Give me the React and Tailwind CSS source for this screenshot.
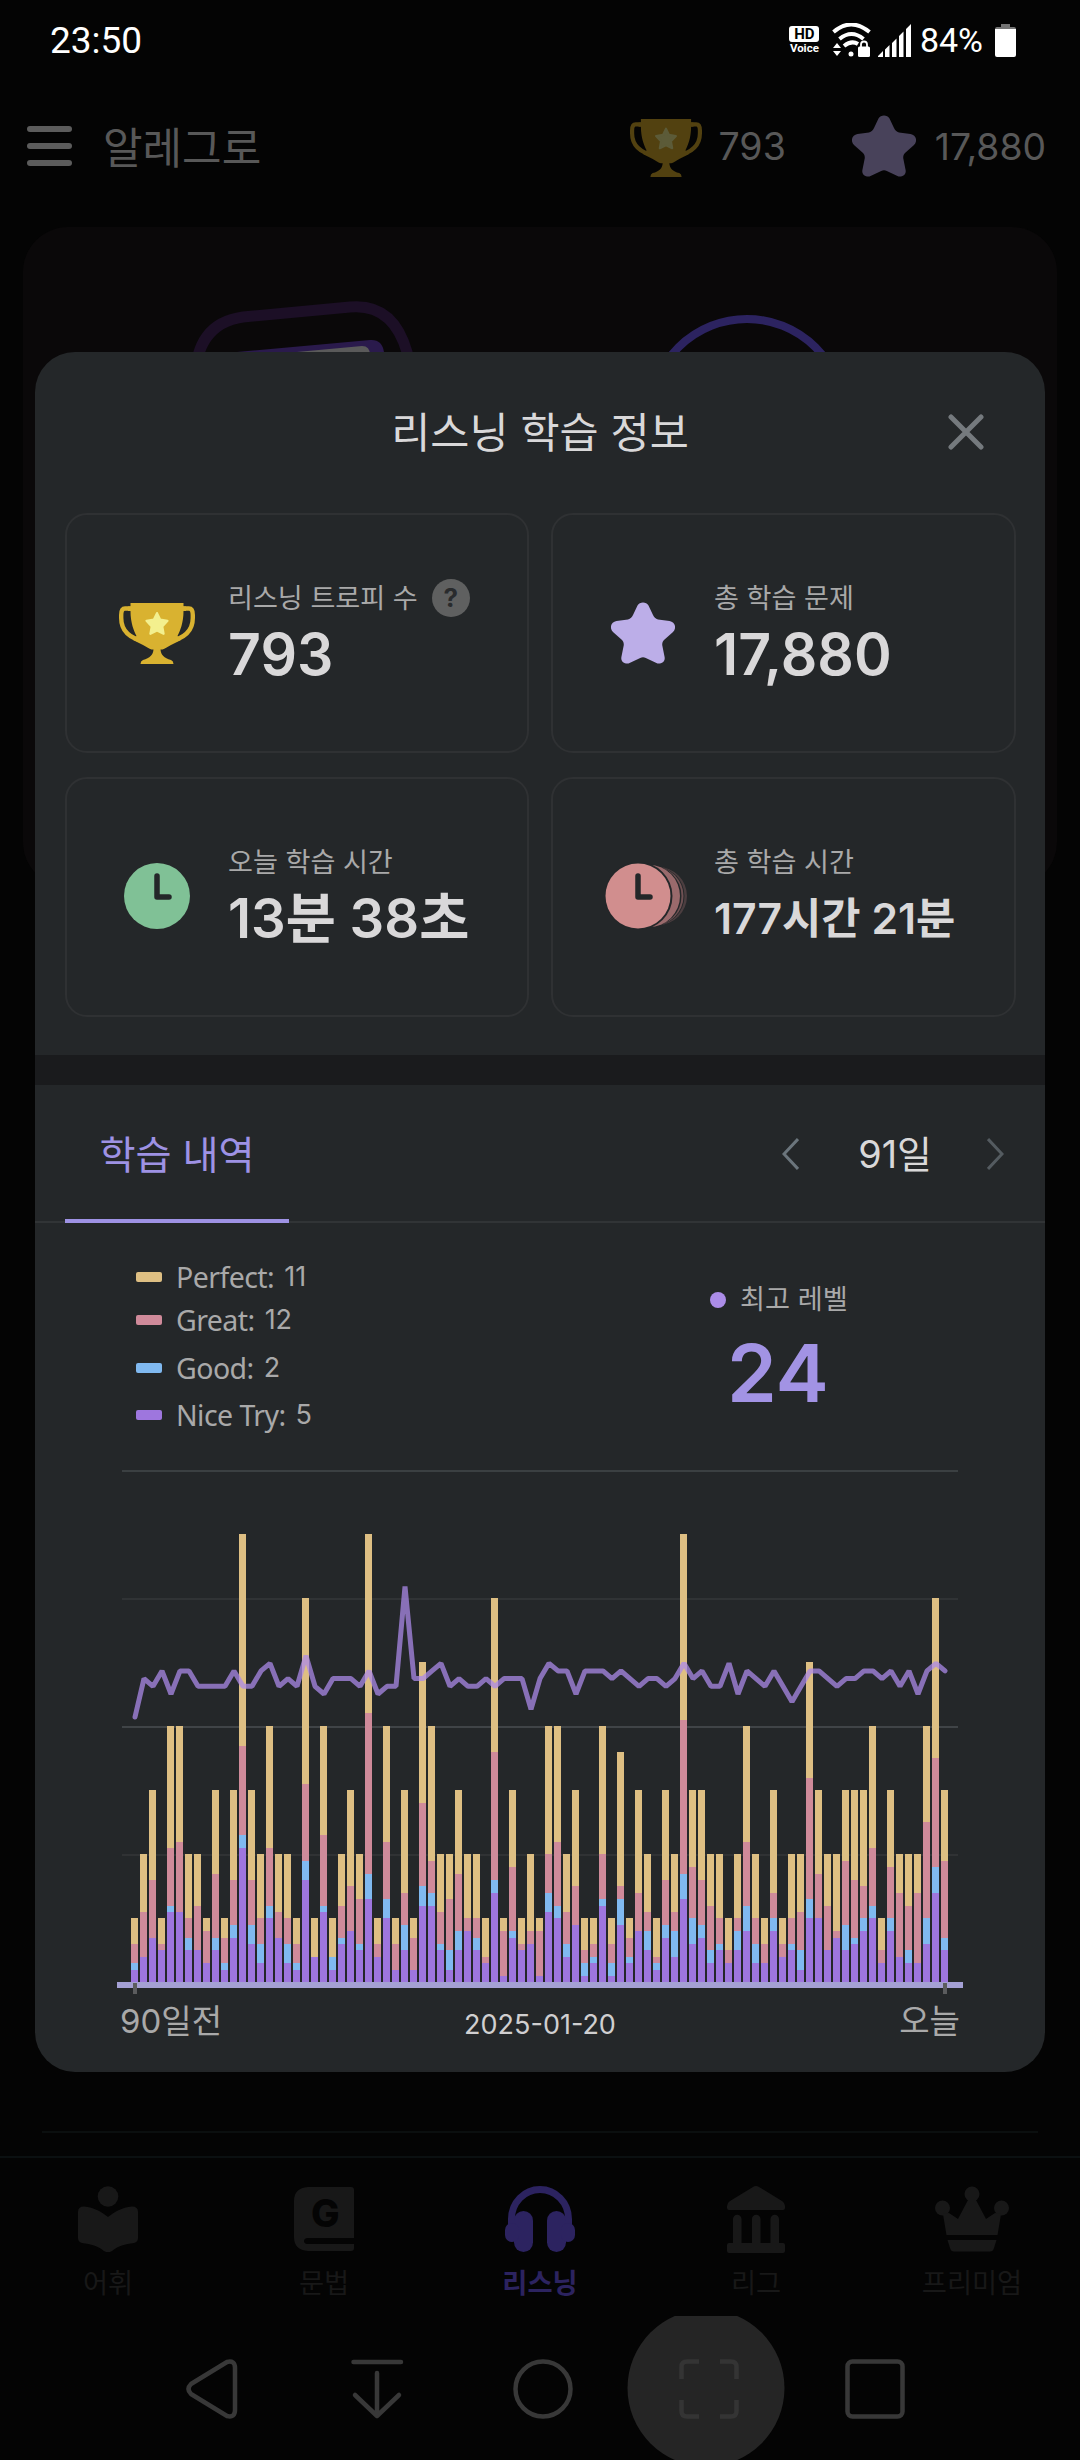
import React from 'react';

// [nice try, good, great, perfect] running totals per day
const days = [
  [2,3,6,10],[4,4,11,20],[7,7,16,30],[5,5,6,10],[11,12,21,40],[11,11,22,40],[5,7,10,20],[5,5,12,20],[3,3,8,10],[5,7,17,30],
  [2,3,7,10],[7,9,16,30],[21,23,37,70],[6,9,16,30],[3,6,10,20],[10,12,21,40],[7,7,11,20],[3,6,10,20],[2,3,6,10],[16,19,31,60],
  [4,4,4,10],[11,12,23,40],[2,4,4,10],[6,7,12,20],[8,8,15,30],[5,6,13,20],[13,17,42,70],[4,4,6,10],[10,13,22,40],[2,2,6,10],
  [5,9,14,30],[2,2,7,10],[12,15,28,50],[12,14,19,40],[5,6,11,20],[2,5,13,20],[5,8,17,30],[8,8,10,20],[5,7,10,20],[3,3,4,10],
  [14,16,36,60],[1,1,8,10],[7,8,18,30],[5,5,6,10],[6,6,8,20],[1,1,8,10],[11,14,20,40],[10,12,22,40],[4,6,11,20],[9,9,15,30],
  [1,3,5,10],[3,4,6,10],[12,13,20,40],[1,3,6,10],[9,13,15,36],[3,4,7,10],[8,8,14,30],[5,8,11,20],[2,3,4,10],[7,9,16,30],
  [4,8,11,20],[13,17,41,70],[6,10,18,30],[7,9,16,30],[3,5,12,20],[5,6,10,20],[3,3,5,10],[5,8,10,20],[8,12,22,40],[3,6,10,20],
  [3,3,6,10],[8,10,14,30],[4,4,6,10],[5,6,10,20],[2,5,11,20],[10,13,32,50],[10,10,17,30],[5,5,12,20],[7,7,8,20],[5,9,19,30],
  [6,7,16,30],[8,10,15,30],[10,12,21,40],[3,3,5,10],[8,10,18,30],[4,4,14,20],[3,5,12,20],[3,3,14,20],[6,10,25,40],[14,18,35,60],
  [5,7,19,30],
];

const levels = [
  7,12,11,13,10,13,13,11,11,11,11,13,11,11,13,14,11,12,11,15,11,10,12,12,12,11,13,10,11,11,
  24,12,12,13,14,11,12,11,11,12,11,12,12,12,8,12,14,13,13,10,13,13,13,12,13,12,11,12,12,11,
  12,14,12,13,11,11,14,10,13,12,11,13,11,9,11,13,13,12,11,12,12,13,13,12,13,11,13,10,13,14,
  13,
];

const colors = ['#9e76de', '#80b9f0', '#cf8a9a', '#debf83'];

const legend = [
  { label: 'Perfect:', count: 11, dot: 'bg-[#debf83]', h: 'h-[43px]' },
  { label: 'Great:', count: 12, dot: 'bg-[#cf8a9a]', h: 'h-[43px]' },
  { label: 'Good:', count: 2, dot: 'bg-[#80b9f0]', h: 'h-[53px]' },
  { label: 'Nice Try:', count: 5, dot: 'bg-[#9e76de]', h: 'h-[41px]' },
];

const STAR = 'M32 3 L40.5 20.5 L60 23.5 L46 38.5 L49.5 58 L32 49.5 L14.5 58 L18 38.5 L4 23.5 L23.5 20.5 Z';

function Star({ color, className }) {
  return (
    <svg viewBox="0 0 64 62" className={className}>
      <path d="M26.500 3.600C28.500 -.6 35.500 -.6 37.500 3.600L42 13C43 15.200 44.500 17 47 17.400L58.500 19C64 20 66 26 62 30L53 38C51.500 39.600 51 41.500 51.300 43.500L53.600 55C54.500 60 50.500 62 46.500 61.500L34.800 56Q32 54.600 29.200 56L17.500 61.500C13.500 62 9.500 60 10.400 55L12.700 43.500C13 41.500 12.500 39.600 11 38L2 30C-2 26 0 20 5.500 19L17 17.400C19.500 17 21 15.200 22 13Z" fill={color} />
    </svg>
  );
}

function Trophy({ color, star, className }) {
  return (
    <svg viewBox="0 0 76 61" className={className}>
      <path d="M13 5.500H6Q2.200 5.500 2.200 12V15C2.200 28 11 35.500 26 38.500M63 5.500H70Q73.800 5.500 73.800 12V15C73.800 28 65 35.500 50 38.500" fill="none" stroke={color} strokeWidth="4.400" />
      <path d="M11.500 0H64.500V3.500H67V8H64.500C64.500 20 61 28 58.500 33L62 37L52 42C48 44 46 46 43.500 46.500H41.500C42 52 45 55 52 57Q54.500 58 54.500 61H21.500Q21.500 58 24 57C31 55 34 52 34.500 46.500H32.500C30 46 28 44 24 42L14 37L17.500 33C15 28 11.500 20 11.500 8H9V3.500H11.500Z" fill={color} />
      <path d={STAR} fill={star} stroke={star} strokeWidth="6" strokeLinejoin="round" transform="translate(26 9) scale(.375)" />
    </svg>
  );
}

function Clock({ color, echo }) {
  return (
    <svg viewBox="0 0 84 68" className="w-[84px] h-[68px]">
      {echo && (
        <>
          <circle cx="53" cy="34" r="29" fill="#4c3e40" />
          <circle cx="50" cy="34" r="29.500" fill="#242729" />
          <circle cx="49" cy="34" r="29.500" fill="#6f5153" />
          <circle cx="46" cy="34" r="30.500" fill="#242729" />
          <circle cx="44" cy="34" r="31" fill="#9a6a6c" />
          <circle cx="33.500" cy="34" r="34" fill="#242729" />
        </>
      )}
      <circle cx="33" cy="34" r={echo ? 32.500 : 33} fill={color} />
      <path d="M33 14V35H45" fill="none" stroke="#242729" strokeWidth="5.500" strokeLinecap="round" strokeLinejoin="round" />
    </svg>
  );
}

function StatCard({ icon, label, help, value, valueClass }) {
  return (
    <div className="flex h-60 items-center rounded-[22px] border-2 border-[#2f3133]">
      <div className="flex w-[161px] shrink-0">{icon}</div>
      <div className="flex flex-col pt-[5px]">
        <div className="flex h-[38px] items-center text-[27.100px] leading-[38px] text-[#a9a9a9] whitespace-nowrap">
          <span className="pt-[2px]">{label}</span>
          {help && (
            <span className="ml-[14px] flex h-[38px] w-[38px] items-center justify-center rounded-full bg-[#5f6060] text-[26px] font-bold text-[#292b2d]">?</span>
          )}
        </div>
        <div className={'flex h-[76px] items-center whitespace-nowrap font-semibold text-[#d9d8d9] ' + valueClass}>{value}</div>
      </div>
    </div>
  );
}

function StatusBar() {
  return (
    <div className="flex h-[80px] items-center justify-between pl-[50px] pr-[64px] font-['Roboto'] text-white">
      <span className="text-[37px] leading-none">23:50</span>
      <div className="flex h-[33px] items-center">
        <div className="mr-[12px] flex w-[31px] flex-col items-center">
          <span className="flex h-[16px] w-[30px] items-center justify-center rounded-[3px] bg-white text-[15px] font-bold leading-none text-black">HD</span>
          <span className="text-[11.500px] font-bold leading-[12px]">Voice</span>
        </div>
        <svg viewBox="0 0 40 34" className="w-[40px] h-[34px]" fill="none" stroke="#fff" strokeWidth="4">
          <path d="M1.500 9Q19 -6 37.500 9" />
          <path d="M7.500 16Q19.500 6 31.500 16" />
          <path d="M12 23Q19.500 17 26 21" />
          <circle cx="19" cy="31" r="2.500" fill="#fff" stroke="none" />
          <path d="M1 25L5 20L9 25ZM1 28L5 33L9 28Z" fill="#fff" stroke="none" />
          <rect x="26" y="23.500" width="12" height="10.500" rx="1.500" fill="#fff" stroke="none" />
          <path d="M29 24V21.500Q29 18.500 32 18.500T35 21.500V24" strokeWidth="1.800" />
        </svg>
        <svg viewBox="0 0 34 33" className="ml-[6px] w-[34px] h-[33px]" fill="#fff">
          <path d="M0 33V32L5 27V33ZM7 33V25.500L11.500 21V33ZM14 33V19L18.500 14.500V33ZM21 33V12L25.500 7.500V33ZM28 33V5L33 0V33Z" />
        </svg>
        <span className="ml-[8px] text-[34px] leading-none">84%</span>
        <svg viewBox="0 0 21 33" className="ml-[12px] w-[21px] h-[33px]">
          <path d="M6 0H15V3H19Q21 3 21 5H0Q0 3 2 3H6Z" fill="#757575" />
          <path d="M0 5H21V31Q21 33 19 33H2Q0 33 0 31Z" fill="#fff" />
        </svg>
      </div>
    </div>
  );
}

function Header() {
  return (
    <div className="flex h-[147px] items-start pl-[27px] pr-[34px] pt-[35px] text-[#585858]">
      <div className="mt-[11px] flex w-[45px] flex-col gap-[11px]">
        <div className="h-[6px] rounded-full bg-[#5c5c5c]" />
        <div className="h-[6px] rounded-full bg-[#5c5c5c]" />
        <div className="h-[6px] rounded-full bg-[#5c5c5c]" />
      </div>
      <span className="ml-[31px] pt-[2px] text-[43px] leading-[62px]">알레그로</span>
      <div className="ml-auto flex">
        <Trophy color="#524110" star="#5c5b38" className="mt-[4px] h-[58px] w-[72px]" />
        <span className="ml-[17px] pt-px text-[37.500px] leading-[62px]">793</span>
        <Star color="#48425a" className="ml-[66px] h-[62px] w-[64px]" />
        <span className="ml-[19px] pt-px text-[37.300px] leading-[62px]">17,880</span>
      </div>
    </div>
  );
}

function HomeCard() {
  return (
    <div className="mx-[23px] h-[660px] overflow-hidden rounded-[45px] bg-[#0a0809]">
      <svg viewBox="23 227 1034 200" className="w-[1034px] h-[200px]" fill="none">
        <path d="M195 390Q192 324 243 317L350 307Q393 303 407 352L412 400" stroke="#1c0f26" strokeWidth="11" />
        <path d="M226 353L370 340Q382 339 384 352V400H226Z" fill="#2a1a4c" />
        <path d="M286 353L362 346Q370 346 370 355V400H286Z" fill="#5a5a5a" />
        <circle cx="747" cy="416" r="97" stroke="#2c2360" strokeWidth="8" />
      </svg>
    </div>
  );
}

function Chart() {
  const unit = 6.405;
  const y = (v) => 512.500 - v * unit;
  const line = levels.map((l, i) => `${18 + i * 9},${(216.300 - (l - 11) * 7.680).toFixed(1)}`).join(' ');
  return (
    <svg viewBox="0 0 846 524" className="w-[846px] h-[524px]">
      <g shapeRendering="crispEdges">
        <rect x="5" y="0" width="836" height="2" fill="#3b4042" />
        <rect x="5" y="128" width="836" height="2" fill="#303335" />
        <rect x="5" y="256" width="836" height="2" fill="#404447" />
        <rect x="5" y="384" width="836" height="2" fill="#303234" />
        {days.map((d, i) => (
          <g key={i}>
            {d.map((v, j) => {
              const low = j ? d[j - 1] : 0;
              return v > low ? <rect key={j} x={14 + i * 9} y={y(v)} width="7" height={(v - low) * unit} fill={colors[j]} /> : null;
            })}
          </g>
        ))}
        <rect x="0" y="512" width="846" height="6" fill="#a4a0d4" />
        <rect x="16" y="513" width="4" height="11" fill="#5b5c5e" />
        <rect x="826" y="513" width="4" height="11" fill="#5b5c5e" />
      </g>
      <polyline points={line} fill="none" stroke="#ab8aea" strokeOpacity=".74" strokeWidth="5" strokeLinecap="round" strokeLinejoin="bevel" />
    </svg>
  );
}

function StudyModal() {
  return (
    <div className="absolute left-[35px] top-[352px] flex h-[1720px] w-[1010px] flex-col rounded-[40px] bg-[#242729] text-[#d9d8d9]">
      <div className="relative flex h-[161px] justify-center pt-[50px]">
        <h2 className="text-[42.500px] leading-[62px]">리스닝 학습 정보</h2>
        <svg viewBox="0 0 36 36" className="absolute right-[61px] top-[62px] w-[36px] h-[36px]" stroke="#757a7e" strokeWidth="5" strokeLinecap="round">
          <path d="M3 3L33 33M33 3L3 33" />
        </svg>
      </div>

      <div className="grid grid-cols-[464px_465px] gap-x-[22px] gap-y-6 pl-[30px]">
        <StatCard icon={<Trophy color="#d9b230" star="#f3f08e" className="ml-[52px] mt-px h-[61px] w-[76px]" />} label="리스닝 트로피 수" help value="793" valueClass="text-[57.200px]" />
        <StatCard icon={<Star color="#bcaee8" className="-mt-px ml-[58px] h-[62px] w-[64px]" />} label="총 학습 문제" value="17,880" valueClass="text-[57.200px]" />
        <StatCard icon={<div className="-mt-[2px] ml-[57px]"><Clock color="#80c196" /></div>} label="오늘 학습 시간" value="13분 38초" valueClass="text-[54.500px]" />
        <StatCard icon={<div className="-mt-[2px] ml-[52px]"><Clock color="#d18e8e" echo /></div>} label="총 학습 시간" value="177시간 21분" valueClass="text-[42.700px] pt-px" />
      </div>

      <div className="mt-[38px] h-[30px] bg-[#1a1b1d]" />

      <div className="flex h-[138px] items-stretch border-b-2 border-[#313436] pl-[30px] pr-[41px]">
        <div className="-mb-[2px] flex w-[224px] justify-center border-b-4 border-[#9e92e4] pt-[40px] text-[39.200px] leading-[60px] text-[#9e92e4]">학습 내역</div>
        <div className="ml-auto flex items-start pt-[39px]">
          <svg viewBox="0 0 17 32" className="mt-[14px] w-[17px] h-[32px]" fill="none" stroke="#6b757c" strokeWidth="3">
            <path d="M16 1L2 16L16 31" />
          </svg>
          <span className="w-[188px] pl-[4px] text-center text-[37.800px] leading-[60px]">91일</span>
          <svg viewBox="0 0 17 32" className="mt-[14px] w-[17px] h-[32px]" fill="none" stroke="#545b60" strokeWidth="3">
            <path d="M1 1L15 16L1 31" />
          </svg>
        </div>
      </div>

      <div className="flex h-[247px] pl-[101px]">
        <div className="flex w-[574px] flex-col pt-[32px] text-[#a9a9a9]">
          {legend.map((l) => (
            <div key={l.label} className={'flex items-center ' + l.h}>
              <span className={'mr-[14px] h-[10px] w-[26px] rounded-[2px] ' + l.dot} />
              <span className="font-['Noto_Sans'] text-[28.500px] leading-[40px] tracking-[-0.550px]">{l.label}</span>
              <span className="ml-[10px] text-[27px] leading-[40px]">{l.count}</span>
            </div>
          ))}
        </div>
        <div className="pt-[58px]">
          <div className="flex h-[38px] items-center text-[27.200px] text-[#a9a9a9]">
            <span className="mr-[14px] h-[16px] w-[16px] rounded-full bg-[#ac8de8]" />
            <span className="pt-px">최고 레벨</span>
          </div>
          <div className="-mt-px pl-[17px] text-[80px] font-semibold leading-[110px] text-[#a293e4]">24</div>
        </div>
      </div>

      <div className="px-[82px]">
        <Chart />
        <div className="flex justify-between pl-[3px] pr-[3px] text-[33px] leading-[54px] text-[#a9a9a9]">
          <span className="w-[150px]">90일전</span>
          <span className="pt-[4px] text-[27px] text-[#d0cfd0]">2025-01-20</span>
          <span className="w-[150px] text-right">오늘</span>
        </div>
      </div>
    </div>
  );
}

function TabBar() {
  const tabs = [
    {
      label: '어휘',
      icon: (
        <svg viewBox="0 0 60 66" className="w-[60px] h-[66px]" fill="currentColor">
          <circle cx="30" cy="10.500" r="10.300" />
          <path d="M0 26Q0 20.500 6 20.500C16 21.500 24 26 30 31C36 26 44 21.500 54 20.500Q60 20.500 60 26V52Q60 56 56 57C47 58 40 60 34 65Q30 67.500 26 65C20 60 13 58 4 57Q0 56 0 52Z" />
        </svg>
      ),
    },
    {
      label: '문법',
      icon: (
        <div className="relative">
          <svg viewBox="0 0 60 64" className="w-[60px] h-[64px]" fill="currentColor">
            <path d="M14 0H57Q60 0 60 3V51H13Q10 51.500 10 54T13 57H60V61Q60 64 57 64H14Q0 63 0 50V14Q0 1 14 0Z" />
          </svg>
          <span className="absolute left-[17px] top-[3px] text-[38px] font-extrabold leading-[46px] text-[#040404]">G</span>
        </div>
      ),
    },
    {
      label: '리스닝',
      active: true,
      icon: (
        <svg viewBox="0 0 70 66" className="w-[70px] h-[66px]" fill="currentColor">
          <path d="M6.500 40V33A28.500 29.500 0 0 1 63.500 33V40" fill="none" stroke="currentColor" strokeWidth="7" />
          <rect x="9" y="25" width="19" height="41" rx="9.500" />
          <rect x="42" y="25" width="19" height="41" rx="9.500" />
          <rect x="0" y="37" width="14" height="19" rx="7" />
          <rect x="56" y="37" width="14" height="19" rx="7" />
        </svg>
      ),
    },
    {
      label: '리그',
      icon: (
        <svg viewBox="0 0 58 67" className="w-[58px] h-[67px]" fill="currentColor">
          <path d="M26 1Q29 -1 32 1L55 15Q58 17 58 20V22Q58 24 56 24H2Q0 24 0 22V20Q0 17 3 15Z" />
          <path d="M6 57V33A4.200 4.200 0 0 1 14.500 33V57H25V33A4.200 4.200 0 0 1 33.500 33V57H43.500V33A4.200 4.200 0 0 1 52 33V57H56Q58 57 58 59V65Q58 67 56 67H2Q0 67 0 65V59Q0 57 2 57Z" />
        </svg>
      ),
    },
    {
      label: '프리미엄',
      icon: (
        <svg viewBox="0 0 74 66" className="w-[74px] h-[66px]" fill="currentColor">
          <circle cx="37" cy="8" r="7.500" />
          <circle cx="7.500" cy="22" r="7.500" />
          <circle cx="66.500" cy="22" r="7.500" />
          <path d="M8 28L14 27L23 33L33 14H41L51 33L60 27L66 28L62.500 49H11.500ZM12.500 54H61.500L59 62Q58 65.500 55 65.500H19Q16 65.500 15 62Z" />
        </svg>
      ),
    },
  ];
  return (
    <div className="flex h-[160px] border-t-2 border-[#0b1011] text-[#181818]">
      {tabs.map((t) => (
        <div key={t.label} className={t.active ? 'flex w-[216px] flex-col items-center text-[#2c2360] font-bold' : 'flex w-[216px] flex-col items-center'}>
          <div className="flex h-[102px] items-center pt-[20px]">{t.icon}</div>
          <span className="text-[27.300px] leading-[48px]">{t.label}</span>
        </div>
      ))}
    </div>
  );
}

function SystemNav() {
  return (
    <svg viewBox="0 2316 1080 144" className="w-[1080px] h-[144px]" fill="none" stroke="#383838" strokeWidth="5" strokeLinecap="round" strokeLinejoin="round">
      <path d="M227 2362L191 2384Q186 2389 191 2394L227 2416Q235 2418 235 2410V2368Q235 2360 227 2362Z" strokeWidth="4.500" />
      <path d="M353.500 2362H401M377 2373V2416M355 2395L377 2416L399 2395" strokeWidth="4.500" />
      <circle cx="543" cy="2389" r="27.500" strokeWidth="4.500" />
      <circle cx="706" cy="2388" r="78.500" fill="#252525" stroke="none" />
      <path d="M699 2361.500H687Q681.500 2361.500 681.500 2367V2379M720 2361.500H731Q736.500 2361.500 736.500 2367V2379M681.500 2400V2411Q681.500 2416.500 687 2416.500H699M720 2416.500H731Q736.500 2416.500 736.500 2411V2400" strokeLinecap="butt" stroke="#343434" strokeWidth="4.500" />
      <rect x="847.500" y="2361.500" width="55" height="55" rx="5" strokeWidth="4.500" />
    </svg>
  );
}

export default function App() {
  return (
    <div className="relative flex h-[2460px] w-[1080px] flex-col overflow-hidden bg-[#040404] font-['Inter','Noto_Sans_CJK_KR',sans-serif]">
      <StatusBar />
      <Header />
      <HomeCard />
      <div className="mx-[42px] mt-auto mb-[23px] h-[2px] shrink-0 bg-[#0b0f0f]" />
      <TabBar />
      <SystemNav />
      <StudyModal />
    </div>
  );
}
